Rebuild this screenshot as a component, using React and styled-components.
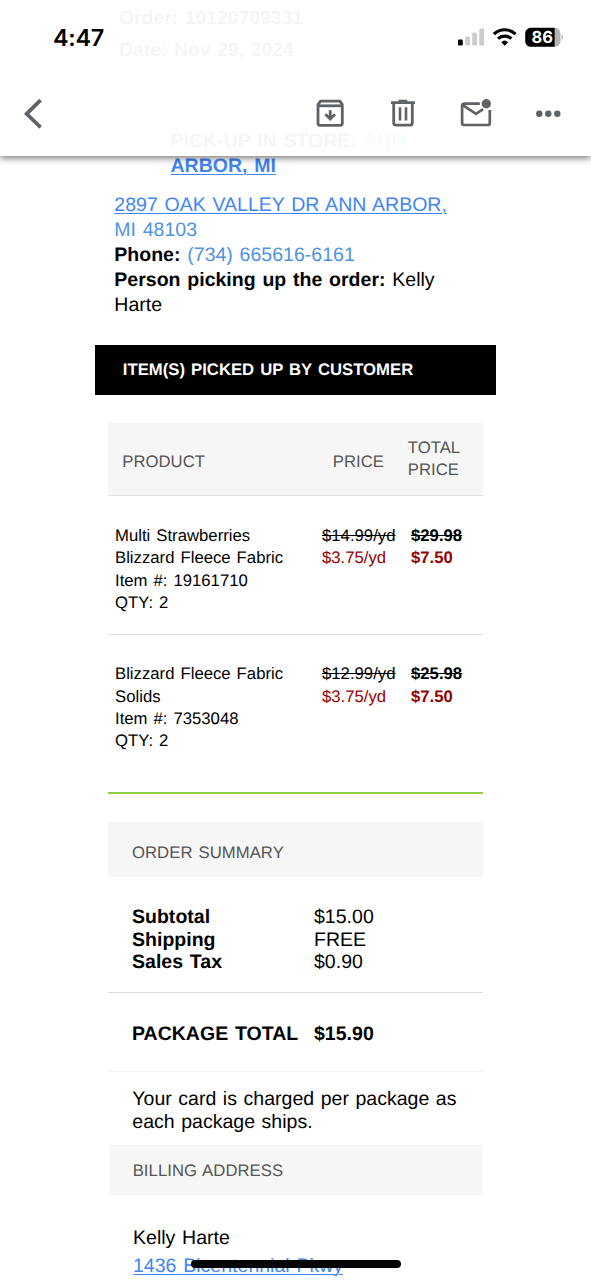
import React from "react";
import styled, { createGlobalStyle } from "styled-components";

const GlobalStyle = createGlobalStyle`
  * {
    box-sizing: border-box;
  }

  body {
    margin: 0;
    background: #fff;
    overflow: hidden;
  }
`;

const Screen = styled.div`
  position: relative;
  width: 591px;
  height: 1280px;
  overflow: hidden;
  background: #fff;
  color: #000;
  font-family: "Liberation Sans", Arial, sans-serif;
  font-size: 19.5px;
  letter-spacing: 0.02px;
  word-spacing: 1.3px;
  line-height: 25px;
  white-space: nowrap;
  text-rendering: geometricPrecision;
`;

// Top bar: stays over the scrolled mail, slightly see-through
const TopBar = styled.header`
  position: absolute;
  top: 0;
  left: 0;
  right: 0;
  height: 156px;
  background: rgba(255, 255, 255, 0.96);
  box-shadow: 0 2px 7px rgba(0, 0, 0, 0.55);
  z-index: 2;
`;

const StatusBar = styled.div`
  display: flex;
  align-items: center;
  justify-content: space-between;
  height: 75px;
  padding: 0 27px 0 53px;
`;

const Time = styled.div`
  font-family: Inter, sans-serif;
  font-size: 23.4px;
  font-weight: 600;
  letter-spacing: -0.3px;
`;

const Toolbar = styled.nav`
  display: flex;
  align-items: center;
  height: 77px;
  padding: 0 30px 0 22px;
`;

const ToolButton = styled.button`
  display: flex;
  padding: 0;
  border: none;
  background: none;
  color: #5f6368;
  margin-right: ${(props) => props.$gap || 0}px;
`;

const Mail = styled.main`
  display: flex;
  flex-direction: column;
`;

const OrderInfo = styled.div`
  margin: 2.6px 0 0 119px;
  font-weight: 700;
  font-size: 19.3px;
  line-height: 32px;
`;

const InfoRule = styled.div`
  width: 364px;
  height: 2px;
  margin: 31px 0 0 114px;
  background: #e9e3b5;
`;

const StoreTitle = styled.div`
  margin: 29.4px 0 0 170.5px;
  font-weight: 700;
  line-height: 25px;
`;

const Link = styled.a`
  color: ${(props) => (props.$soft ? "#4f93e3" : "#4285f4")};
  text-decoration: ${(props) => (props.$soft ? "none" : "underline")};
  text-decoration-thickness: 1.3px;
  text-underline-offset: 1.6px;
`;

const PickupDetails = styled.div`
  margin: 14px 0 0 114.3px;
`;

const Banner = styled.h2`
  width: 400.5px;
  height: 50px;
  margin: 26.7px 0 0 95.3px;
  padding-left: 27.5px;
  background: #000;
  color: #fff;
  font-size: 16.7px;
  line-height: 50.6px;
`;

const Products = styled.section`
  width: 374.5px;
  margin: 28.5px 0 0 108.3px;
  border-bottom: 2px solid #92cc41;
  font-size: 16.7px;
  line-height: 22.2px;
`;

const ProductHead = styled.div`
  display: grid;
  grid-template-columns: 210.5px 75px 1fr;
  align-items: center;
  height: 73.3px;
  padding: 0 0 0 14px;
  border-bottom: 1.5px solid #e0e0e0;
  background: #f6f6f6;
  color: #555;
`;

const HeadCell = styled.div`
  padding-top: ${(props) => (props.$tall ? 0 : 5)}px;
`;

const ProductRow = styled.div`
  display: grid;
  grid-template-columns: 207px 89px 1fr;
  height: ${(props) => (props.$last ? 157.3 : 138.2)}px;
  padding: 28.8px 0 0 6.7px;
  border-bottom: ${(props) => (props.$last ? "none" : "1.5px solid #e4e4e4")};
`;

const PriceCell = styled.div`
  font-weight: ${(props) => (props.$strong ? 700 : 400)};
`;

const SalePrice = styled.div`
  color: #980000;
`;

const SectionBar = styled.h3`
  width: ${(props) => (props.$narrow ? 372.5 : 374.5)}px;
  height: ${(props) => (props.$narrow ? 50 : 55.5)}px;
  margin: ${(props) => (props.$narrow ? "12.2px 0 0 109.7px" : "28px 0 0 108.3px")};
  padding: ${(props) => (props.$narrow ? "0 0 0 23px" : "3px 0 0 23.7px")};
  background: #f6f6f6;
  color: #555;
  font-size: 16.7px;
  font-weight: 400;
  letter-spacing: 0.05px;
  line-height: ${(props) => (props.$narrow ? 51 : 55)}px;
`;

const Totals = styled.dl`
  display: grid;
  grid-template-columns: 182px 1fr;
  width: 374.5px;
  margin: 0 0 0 108.3px;
  padding: ${(props) => (props.$grand ? "29.3px 0 26.5px 23.7px" : "28.8px 0 19.2px 23.7px")};
  border-bottom: 1.3px solid ${(props) => (props.$grand ? "#f4f4f4" : "#ddd")};
  font-weight: ${(props) => (props.$grand ? 700 : 400)};
  line-height: 22.3px;
`;

const TotalLabel = styled.dt`
  font-weight: 700;
`;

const TotalValue = styled.dd`
  margin: 0;
`;

const Note = styled.p`
  margin: 15.8px 0 0 132.3px;
  line-height: 22.3px;
  word-spacing: 1.1px;
`;

const Billing = styled.div`
  margin: 30.2px 0 0 133px;
  line-height: 27.4px;
`;

const HomeIndicator = styled.div`
  position: absolute;
  left: 191px;
  top: 1260.4px;
  width: 210px;
  height: 7.6px;
  border-radius: 4px;
  background: #050505;
  z-index: 3;
`;

const items = [
  {
    name: ["Multi Strawberries", "Blizzard Fleece Fabric"],
    number: "19161710",
    price: "$14.99/yd",
    total: "$29.98",
  },
  {
    name: ["Blizzard Fleece Fabric", "Solids"],
    number: "7353048",
    price: "$12.99/yd",
    total: "$25.98",
  },
];

const summary = [
  ["Subtotal", "$15.00"],
  ["Shipping", "FREE"],
  ["Sales Tax", "$0.90"],
];

// Signal, wifi and battery
function StatusIcons() {
  return (
    <svg width="106" height="22" viewBox="0 0 106 22">
      <rect x="0" y="12.5" width="4.8" height="6" rx="1.3" fill="#000" />
      <rect x="7.2" y="9.5" width="4.8" height="9" rx="1.3" fill="#ccc" />
      <rect x="14.2" y="5.5" width="4.8" height="13" rx="1.3" fill="#ccc" />
      <rect x="21.3" y="1.5" width="4.8" height="17" rx="1.3" fill="#ccc" />
      <g fill="none" stroke="#000" strokeWidth="3.2">
        <path d="M35.9 7.1a15.6 15.6 0 0 1 21.6 0" />
        <path d="M40 11.7a9.8 9.8 0 0 1 13.4 0" />
      </g>
      <path d="M43.3 15.2a5 5 0 0 1 6.8 0L46.7 18.7z" fill="#000" />
      <path d="M96.5.8h.7a5.5 5.5 0 0 1 5.3 5.5v8a5.5 5.5 0 0 1-5.3 5.5h-.7z" fill="#b5b5b5" />
      <path d="M72.7.8h24v19h-24a5.5 5.5 0 0 1-5.5-5.5v-8a5.5 5.5 0 0 1 5.5-5.5z" fill="#000" />
      <path d="M103.6 7.7c2.2.8 2.2 4.4 0 5.2z" fill="#b5b5b5" />
      <text x="84.3" y="16.1" textAnchor="middle" fill="#fff" fontFamily="Inter, sans-serif" fontSize="16.5" fontWeight="700" letterSpacing="0">
        86
      </text>
    </svg>
  );
}

function BackIcon() {
  return (
    <svg width="24" height="32" viewBox="0 0 24 32" fill="none" stroke="currentColor" strokeWidth="3.7">
      <path d="M18.6 2.2 4.6 15.8l14 13.5" />
    </svg>
  );
}

function ArchiveIcon() {
  return (
    <svg width="28" height="29" viewBox="0 0 28 29" fill="none" stroke="currentColor" strokeWidth="2.8">
      <path d="M2 7.2v17.1a2 2 0 0 0 2 2h20.3a2 2 0 0 0 2-2V5.6l-2.4-3.5H4.5L2 5.6z" strokeLinejoin="round" />
      <path d="M2 6.8h24.3" />
      <path d="M14.2 11.2v8.6M9.4 15.2l4.8 4.8 4.8-4.8" />
    </svg>
  );
}

function TrashIcon() {
  return (
    <svg width="26" height="29" viewBox="0 0 26 29" fill="none" stroke="currentColor" strokeWidth="2.8">
      <path d="M1 3.6h24M8.7 2.2h8.6" />
      <path d="M3.7 4v20a2.2 2.2 0 0 0 2.2 2.2h14.2a2.2 2.2 0 0 0 2.2-2.2V4" />
      <path d="M10 8.3v13.3M16 8.3v13.3" strokeWidth="2.6" />
    </svg>
  );
}

function UnreadIcon() {
  return (
    <svg width="32" height="30" viewBox="0 0 32 30" fill="none" stroke="currentColor" strokeWidth="2.7">
      <path d="M19.8 4.6H4.1a2 2 0 0 0-2 2v17.4a2 2 0 0 0 2 2h23.7a2 2 0 0 0 2-2V11" />
      <path d="M2.8 6.2 16 14.8l7.2-4.6" />
      <circle cx="26.3" cy="4.7" r="4.7" fill="currentColor" stroke="none" />
    </svg>
  );
}

function MoreIcon() {
  return (
    <svg width="26" height="8" viewBox="0 0 26 8" fill="currentColor">
      <circle cx="4.3" cy="3.8" r="3.2" />
      <circle cx="13.3" cy="3.8" r="3.2" />
      <circle cx="22.3" cy="3.8" r="3.2" />
    </svg>
  );
}

function App() {
  return (
    <Screen>
      <GlobalStyle />
      <TopBar>
        <StatusBar>
          <Time>4:47</Time>
          <StatusIcons />
        </StatusBar>
        <Toolbar>
          <ToolButton $gap={270} aria-label="Back">
            <BackIcon />
          </ToolButton>
          <ToolButton $gap={46} aria-label="Archive">
            <ArchiveIcon />
          </ToolButton>
          <ToolButton $gap={44} aria-label="Delete">
            <TrashIcon />
          </ToolButton>
          <ToolButton $gap={43} aria-label="Mark as unread">
            <UnreadIcon />
          </ToolButton>
          <ToolButton aria-label="More">
            <MoreIcon />
          </ToolButton>
        </Toolbar>
      </TopBar>

      <Mail>
        <OrderInfo>
          Order: 10120709331
          <br />
          Date: Nov 29, 2024
        </OrderInfo>
        <InfoRule />
        <StoreTitle>
          PICK-UP IN STORE: <Link>ANN</Link>
          <br />
          <Link>ARBOR, MI</Link>
        </StoreTitle>
        <PickupDetails>
          <Link>2897 OAK VALLEY DR ANN ARBOR,</Link>
          <br />
          <Link $soft>MI 48103</Link>
          <br />
          <b>Phone:</b> <Link $soft>(734) 665616-6161</Link>
          <br />
          <b>Person picking up the order:</b> Kelly
          <br />
          Harte
        </PickupDetails>

        <Banner>ITEM(S) PICKED UP BY CUSTOMER</Banner>

        <Products>
          <ProductHead>
            <HeadCell>PRODUCT</HeadCell>
            <HeadCell>PRICE</HeadCell>
            <HeadCell $tall>
              TOTAL
              <br />
              PRICE
            </HeadCell>
          </ProductHead>
          {items.map((item, i) => (
            <ProductRow key={item.number} $last={i === items.length - 1}>
              <div>
                {item.name[0]}
                <br />
                {item.name[1]}
                <br />
                Item #: {item.number}
                <br />
                QTY: 2
              </div>
              <PriceCell>
                <s>{item.price}</s>
                <SalePrice>$3.75/yd</SalePrice>
              </PriceCell>
              <PriceCell $strong>
                <s>{item.total}</s>
                <SalePrice>$7.50</SalePrice>
              </PriceCell>
            </ProductRow>
          ))}
        </Products>

        <SectionBar>ORDER SUMMARY</SectionBar>
        <Totals>
          {summary.map(([label, value]) => (
            <React.Fragment key={label}>
              <TotalLabel>{label}</TotalLabel>
              <TotalValue>{value}</TotalValue>
            </React.Fragment>
          ))}
        </Totals>
        <Totals $grand>
          <TotalLabel>PACKAGE TOTAL</TotalLabel>
          <TotalValue>$15.90</TotalValue>
        </Totals>
        <Note>
          Your card is charged per package as
          <br />
          each package ships.
        </Note>

        <SectionBar $narrow>BILLING ADDRESS</SectionBar>
        <Billing>
          Kelly Harte
          <br />
          <Link>1436 Bicentennial Pkwy</Link>
        </Billing>
      </Mail>
      <HomeIndicator />
    </Screen>
  );
}

export default App;
